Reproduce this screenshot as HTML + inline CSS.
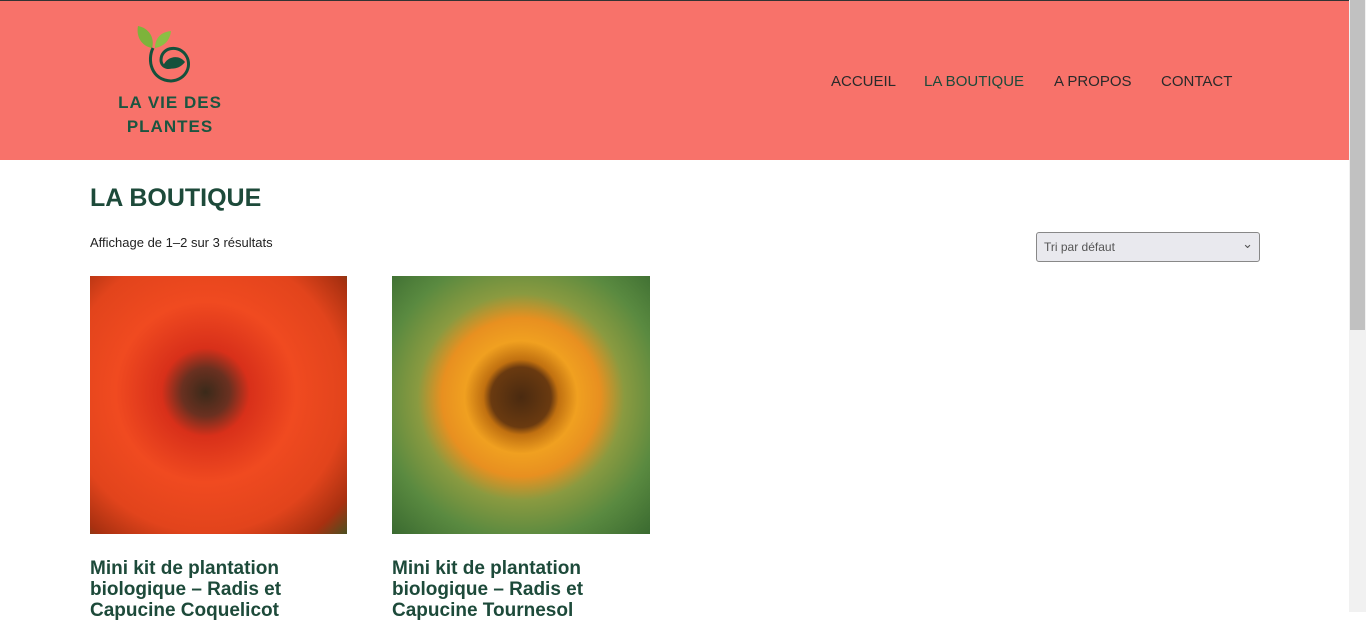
<!DOCTYPE html>
<html><head><meta charset="utf-8"><style>
*{margin:0;padding:0;box-sizing:border-box}
body{width:1366px;height:612px;overflow:hidden;background:#fff;font-family:"Liberation Sans",sans-serif;position:relative}
.hdr{position:absolute;left:0;top:0;width:1349px;height:160px;background:#f8726a;border-top:1px solid #333}
.logo-t{position:absolute;left:110px;top:90px;width:120px;text-align:center;color:#1b5540;font-weight:bold;font-size:17px;line-height:24px;letter-spacing:1px}
nav{position:absolute;top:72px;left:831px;font-size:15px;color:#2a2a2a}
nav span{position:absolute;white-space:nowrap}
h1{position:absolute;left:90px;top:184px;font-size:25px;color:#1d4a3a;font-weight:bold}
.cnt{position:absolute;left:90px;top:235px;font-size:13px;color:#222;font-weight:500}
.sel{position:absolute;left:1036px;top:232px;width:224px;height:30px;border:1px solid #888;border-radius:3px;background:#e9e9ee;font-size:12px;color:#555;padding:7px 7px}
.sel:after{content:"⌄";position:absolute;right:6px;top:3px;font-size:13px}
.img{position:absolute;top:276px;width:258px;height:258px}
.t{position:absolute;top:558px;font-size:19px;font-weight:bold;color:#1d4a3a;line-height:21px;width:260px}
.sb{position:absolute;left:1349px;top:0;width:17px;height:612px;background:#f1f1f1}
.sb div{position:absolute;left:1px;top:0;width:15px;height:330px;background:#c1c1c1}
</style></head><body>
<div class="hdr">
<svg style="position:absolute;left:135px;top:23px" width="60" height="62" viewBox="0 0 60 62">
<path d="M17 24 C6 22 1 12 3 2 C14 4 20 14 17 24Z" fill="#7db33b"/>
<path d="M20 24 C20 14 26 8 36 7 C35 16 30 22 20 24Z" fill="#8bbf44"/>
<path d="M18 24 C12 36 16 56 36 57 C52 56 58 40 50 30 C42 20 26 24 26 36 C26 44 36 46 40 40" fill="none" stroke="#14513c" stroke-width="3"/>
<path d="M28 42 C32 32 44 30 50 38 C44 46 34 46 28 42Z" fill="#14513c"/>
</svg>
<div class="logo-t">LA VIE DES<br>PLANTES</div>
<nav><span style="left:0">ACCUEIL</span><span style="left:93px;color:#1d4a3a">LA BOUTIQUE</span><span style="left:223px">A PROPOS</span><span style="left:330px">CONTACT</span></nav>
</div>
<h1>LA BOUTIQUE</h1>
<div class="cnt">Affichage de 1–2 sur 3 résultats</div>
<div class="sel">Tri par défaut</div>
<div class="img" style="left:90px;width:257px;background:radial-gradient(circle at 45% 45%,#3a2a1a 0,#6a3020 12%,#d8301a 22%,#f04a20 45%,#e2441c 70%,#a83010 88%,#4a5020 100%)"></div>
<div class="img" style="left:392px;background:radial-gradient(circle at 50% 47%,#4a2a10 0,#6a3a10 16%,#c07010 20%,#f0a020 30%,#e89020 42%,#8a9a40 55%,#5a8a40 75%,#3a6a30 100%)"></div>
<div class="t" style="left:90px">Mini kit de plantation biologique – Radis et Capucine Coquelicot</div>
<div class="t" style="left:392px">Mini kit de plantation biologique – Radis et Capucine Tournesol</div>
<div class="sb"><div></div></div>
</body></html>
